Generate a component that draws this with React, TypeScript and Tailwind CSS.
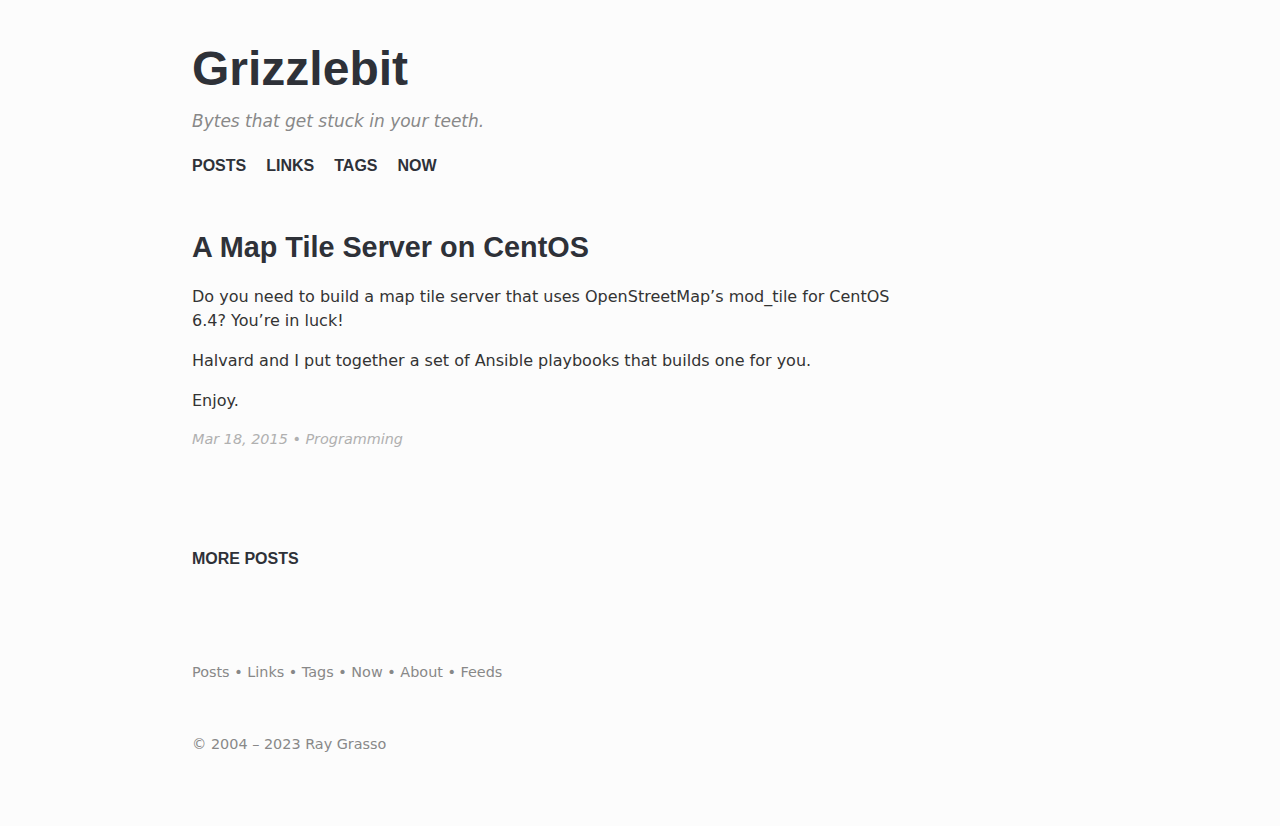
const sans = { fontFamily: '"DejaVu Sans", sans-serif' }

const navItems = ['Posts', 'Links', 'Tags', 'Now']
const footerLinks = ['Posts', 'Links', 'Tags', 'Now', 'About', 'Feeds']

export default function App() {
  return (
    <div className="min-h-[826px] bg-[#fcfcfc] font-['Liberation_Sans',Arial,sans-serif]">
      <div className="mx-auto w-[896px] pt-10 pb-16">
        <header>
          <h1 className="text-[48px] leading-[1.2] font-bold text-[#2e3138]">Grizzlebit</h1>
          <p className="mt-[10px] text-[17px] leading-[27px] italic text-[#888]" style={sans}>
            Bytes that get stuck in your teeth.
          </p>
          <nav className="mt-[19px] flex gap-5 text-[16px] leading-6 font-bold uppercase text-[#2e3138]">
            {navItems.map((item) => (
              <a key={item} href="#">
                {item}
              </a>
            ))}
          </nav>
        </header>

        <article className="mt-[52px] max-w-[720px]">
          <h2 className="text-[1.8rem] leading-[1.2] font-bold text-[#2e3138]">A Map Tile Server on CentOS</h2>
          <div className="mt-[21px] space-y-4 text-[16px] leading-6 text-[#333]" style={sans}>
            <p>Do you need to build a map tile server that uses OpenStreetMap’s mod_tile for CentOS 6.4? You’re in luck!</p>
            <p>Halvard and I put together a set of Ansible playbooks that builds one for you.</p>
            <p>Enjoy.</p>
          </div>
          <p className="mt-4 text-[0.9rem] leading-[21px] italic text-[#b0b0b0]" style={sans}>
            Mar 18, 2015 • Programming
          </p>
        </article>

        <section className="mt-[97px]">
          <h3 className="text-[16px] leading-6 font-bold uppercase text-[#2e3138]">More Posts</h3>
        </section>

        <footer className="mt-[91px] text-[0.9rem] leading-[21px] text-[#888]" style={sans}>
          <p>
            {footerLinks.map((link, i) => (
              <span key={link}>
                {i > 0 && ' • '}
                <a href="#">{link}</a>
              </span>
            ))}
          </p>
          <p className="mt-[51px]">© 2004 – 2023 Ray Grasso</p>
        </footer>
      </div>
    </div>
  )
}
